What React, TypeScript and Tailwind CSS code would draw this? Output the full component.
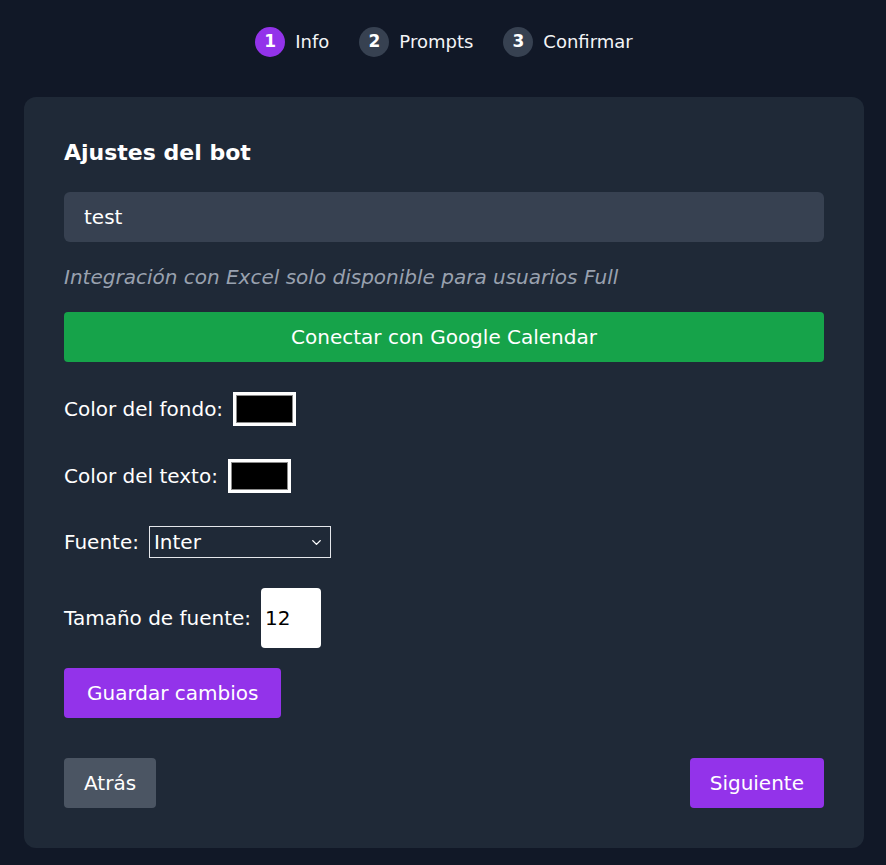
import { ChevronDown } from "lucide-react";

const steps = [
  { n: 1, label: "Info", active: true },
  { n: 2, label: "Prompts", active: false },
  { n: 3, label: "Confirmar", active: false },
];

function Swatch() {
  return (
    <span className="inline-flex h-[34px] w-[63px] bg-white p-[3px]">
      <span className="block h-full w-full border border-[#8a8a8a] bg-black" />
    </span>
  );
}

export default function App() {
  return (
    <div
      className="min-h-[865px] bg-[#111827] pt-[27px] pr-[22px] pb-4 pl-6 text-white"
      style={{ fontFamily: '"DejaVu Sans", "Noto Sans", sans-serif' }}
    >
      <div className="flex items-center justify-center gap-[30px]">
        {steps.map((s) => (
          <div key={s.n} className="flex items-center gap-[10px]">
            <span
              className={`grid h-[30px] w-[30px] place-items-center rounded-full text-[17px] font-bold ${
                s.active ? "bg-[#9333ea]" : "bg-[#374151]"
              }`}
            >
              {s.n}
            </span>
            <span className="text-lg text-gray-100">{s.label}</span>
          </div>
        ))}
      </div>

      <div className="mt-10 rounded-xl bg-[#1f2937] px-10 pt-10 pb-10 text-[20px]">
        <h2 className="text-[22px] leading-8 font-bold">Ajustes del bot</h2>

        <div className="mt-[23px] flex h-[50px] items-center rounded-md bg-[#374151] px-5">
          test
        </div>

        <p className="mt-[21px] leading-7 text-gray-400 italic">
          Integración con Excel solo disponible para usuarios Full
        </p>

        <button
          type="button"
          className="mt-[21px] flex h-[50px] w-full items-center justify-center rounded bg-[#16a34a]"
        >
          Conectar con Google Calendar
        </button>

        <div className="mt-[30px] flex items-center gap-[10px]">
          <span>Color del fondo:</span>
          <Swatch />
        </div>

        <div className="mt-[33px] flex items-center gap-[10px]">
          <span>Color del texto:</span>
          <Swatch />
        </div>

        <div className="mt-[33px] flex items-center gap-[10px]">
          <span>Fuente:</span>
          <span className="flex h-[32px] w-[182px] items-center justify-between border border-gray-200 pr-1.5 pl-1">
            Inter
            <ChevronDown size={15} strokeWidth={2.25} />
          </span>
        </div>

        <div className="mt-[30px] flex items-center gap-[10px]">
          <span>Tamaño de fuente:</span>
          <span className="flex h-[60px] w-[60px] items-center rounded-sm bg-white pl-1 text-black">
            12
          </span>
        </div>

        <button type="button" className="mt-5 h-[50px] rounded bg-[#9333ea] px-[23px]">
          Guardar cambios
        </button>

        <div className="mt-10 flex items-center justify-between">
          <button type="button" className="h-[50px] rounded bg-[#4b5563] px-5">
            Atrás
          </button>
          <button type="button" className="h-[50px] rounded bg-[#9333ea] px-5">
            Siguiente
          </button>
        </div>
      </div>
    </div>
  );
}
